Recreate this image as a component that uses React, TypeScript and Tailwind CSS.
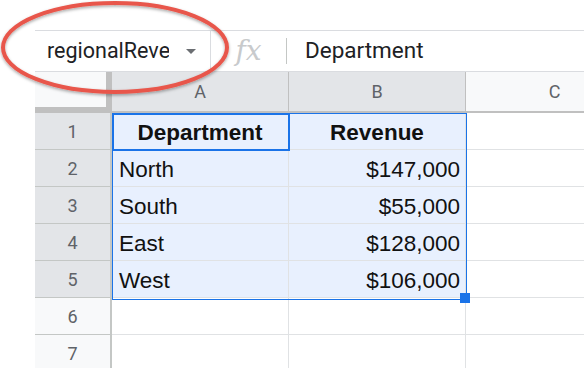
const rows = [
  { a: "Department", b: "Revenue", head: true },
  { a: "North", b: "$147,000" },
  { a: "South", b: "$55,000" },
  { a: "East", b: "$128,000" },
  { a: "West", b: "$106,000" },
  { a: "", b: "", empty: true },
  { a: "", b: "", empty: true },
];

export default function App() {
  return (
    <div className="relative h-[368px] w-[584px] overflow-hidden bg-white font-['Liberation_Sans',Arial,sans-serif]">
      <div className="flex flex-col pl-[35px] pt-[30px]">
        {/* formula bar */}
        <div className="flex h-[42px] items-center border-y border-[#dadce0] bg-white font-['Roboto',sans-serif]">
          <div className="flex h-full w-[176px] shrink-0 items-center border-r border-[#dadce0] pl-[12px] pr-[14px]">
            <div className="w-[122px] overflow-hidden whitespace-nowrap text-[21.5px] text-[#202124]">regionalReve</div>
            <div className="ml-auto h-0 w-0 border-x-[5px] border-t-[5px] border-x-transparent border-t-[#6b6e72]" />
          </div>
          <div className="flex w-[75px] shrink-0 items-center justify-center font-['DejaVu_Serif',serif] text-[28px] italic text-[#c8cacc]">
            fx
          </div>
          <div className="h-[26px] w-px bg-[#c4c7c5]" />
          <div className="pl-[18px] text-[22.5px] text-[#202124]">Department</div>
        </div>

        {/* column headers */}
        <div className="flex h-[41px] font-['Roboto',sans-serif] text-[18px] text-[#5f6368]">
          <div className="w-[77px] shrink-0 border-b-[6px] border-r-[6px] border-[#c0c0c0] bg-[#f8f9fa]" />
          <div className="flex w-[177px] shrink-0 items-center justify-center border-b-2 border-r border-[#c0c0c0] bg-[#e3e5e8]">A</div>
          <div className="flex w-[177px] shrink-0 items-center justify-center border-b-2 border-r border-[#c0c0c0] bg-[#e3e5e8]">B</div>
          <div className="flex w-[177px] shrink-0 items-center justify-center border-b-2 border-[#c0c0c0] bg-[#f8f9fa]">C</div>
        </div>

        {/* grid rows */}
        {rows.map((r, i) => (
          <div key={i} className="flex h-[37px]">
            <div
              className={
                r.empty
                  ? "flex w-[77px] shrink-0 items-center justify-center border-b border-r-2 border-[#c4c7c5] bg-[#f8f9fa] font-['Roboto',sans-serif] text-[18px] text-[#5f6368]"
                  : "flex w-[77px] shrink-0 items-center justify-center border-b border-r-2 border-[#c4c7c5] bg-[#e3e5e8] font-['Roboto',sans-serif] text-[18px] text-[#5f6368]"
              }
            >
              {i + 1}
            </div>
            <div
              className={
                r.head
                  ? "flex w-[177px] shrink-0 items-center justify-center border-b border-r border-[#e0e2e4] bg-[#e8f0fe] pt-[3px] text-[22.5px] font-bold text-[#111]"
                  : r.empty
                    ? "w-[177px] shrink-0 border-b border-r border-[#e0e2e4] bg-white"
                    : "flex w-[177px] shrink-0 items-center border-b border-r border-[#e0e2e4] bg-[#e8f0fe] pl-[7px] pt-[3px] text-[22.5px] text-[#111]"
              }
            >
              {r.a}
            </div>
            <div
              className={
                r.head
                  ? "flex w-[177px] shrink-0 items-center justify-center border-b border-r border-[#e0e2e4] bg-[#e8f0fe] pt-[3px] text-[22.5px] font-bold text-[#111]"
                  : r.empty
                    ? "w-[177px] shrink-0 border-b border-r border-[#e0e2e4] bg-white"
                    : "flex w-[177px] shrink-0 items-center justify-end border-b border-r border-[#e0e2e4] bg-[#e8f0fe] pr-[5px] pt-[3px] text-[22.5px] text-[#111]"
              }
            >
              {r.b}
            </div>
            <div className="w-[177px] shrink-0 border-b border-[#e0e2e4] bg-white" />
          </div>
        ))}
      </div>

      {/* selection range + active cell + fill handle */}
      <div className="pointer-events-none absolute left-[112px] top-[113px] h-[187px] w-[355px] border border-[#1a73e8]" />
      <div className="pointer-events-none absolute left-[112px] top-[113px] h-[38px] w-[178px] border-2 border-[#1a73e8]" />
      <div className="absolute left-[460px] top-[293px] h-[10px] w-[10px] bg-[#1a73e8]" />

      {/* red annotation ellipse */}
      <svg className="pointer-events-none absolute left-0 top-0" width="584" height="368">
        <defs>
          <filter id="sh" x="-10%" y="-20%" width="120%" height="140%">
            <feDropShadow dx="0" dy="1.5" stdDeviation="1.5" floodColor="#000" floodOpacity="0.35" />
          </filter>
        </defs>
        <ellipse cx="115" cy="47.5" rx="112" ry="44.5" fill="none" stroke="#e8574b" strokeWidth="4" filter="url(#sh)" />
      </svg>
    </div>
  );
}
